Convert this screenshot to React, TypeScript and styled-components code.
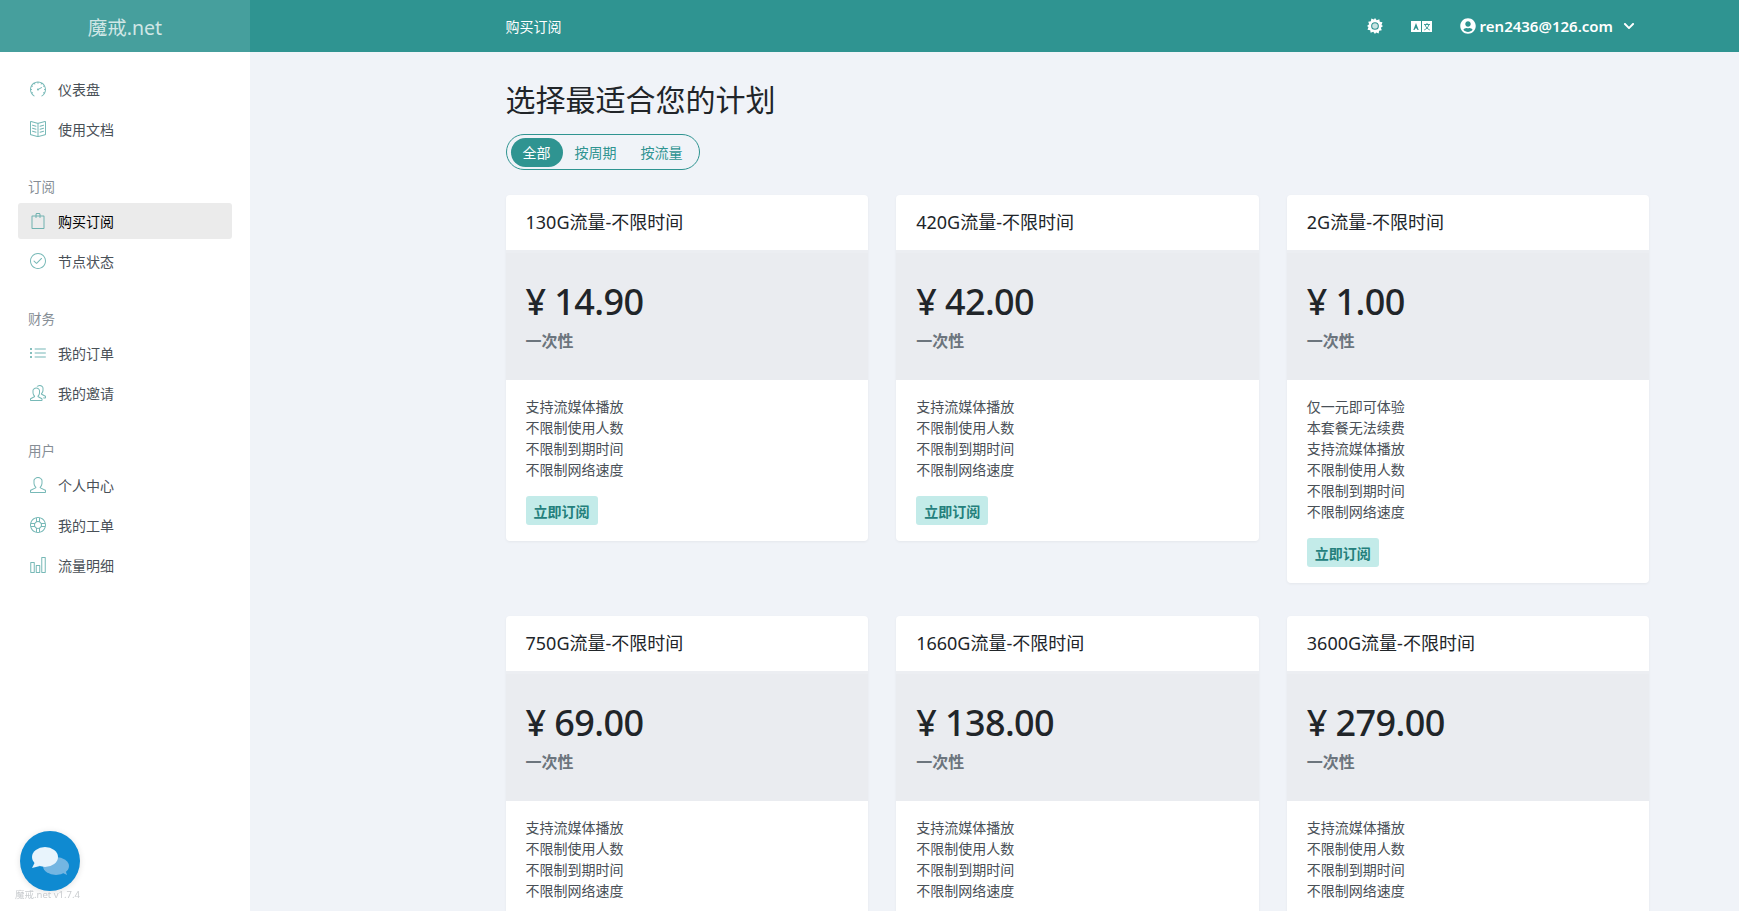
import { createGlobalStyle } from "styled-components";
import styled from "styled-components";
import { FaUserCircle, FaChevronDown } from "react-icons/fa";
import {
  SlSpeedometer,
  SlBookOpen,
  SlBag,
  SlCheck,
  SlList,
  SlPeople,
  SlUser,
  SlSupport,
  SlChart,
} from "react-icons/sl";
import type { ReactNode } from "react";

const GlobalStyle = createGlobalStyle`
  * { box-sizing: border-box; }
  html, body {
    margin: 0;
    height: 100%;
    overflow: hidden;
    background: #f0f3f8;
    color: #212529;
    font-family: "Noto Sans", "Noto Sans CJK SC", sans-serif;
    font-size: 14px;
  }
`;

const Page = styled.div`
  display: grid;
  grid-template-columns: 250px 1fr;
  grid-template-rows: 52px 1fr;
  height: 100vh;
  overflow: hidden;
`;

const Logo = styled.div`
  display: flex;
  align-items: center;
  justify-content: center;
  background: #469f9d;
  color: rgba(255, 255, 255, 0.75);
  font-size: 19.5px;
`;

const TopBar = styled.header`
  display: flex;
  align-items: center;
  justify-content: space-between;
  padding: 0 104px 0 255.5px;
  background: #2f9491;
  color: #fff;
`;

const TopTitle = styled.span`
  font-size: 14px;
`;

const TopActions = styled.div`
  display: flex;
  align-items: center;
  gap: 28px;
`;

const UserMenu = styled.div`
  display: flex;
  align-items: center;
  gap: 4px;
  font-size: 15px;
  font-weight: 600;
  > svg:last-child {
    margin-left: 6px;
  }
`;

const Sidebar = styled.nav`
  background: #fff;
  padding: 19px 18px 0;
`;

const SectionLabel = styled.div`
  height: 24px;
  line-height: 24px;
  margin: 28px 0 4px;
  padding-left: 10px;
  color: #868e96;
  font-size: 13.5px;
`;

const NavItem = styled.a<{ $active?: boolean }>`
  display: flex;
  align-items: center;
  gap: 12px;
  height: 36px;
  margin-bottom: 4px;
  padding: 0 12px;
  border-radius: 3px;
  background: ${(p) => (p.$active ? "#ebebeb" : "transparent")};
  color: ${(p) => (p.$active ? "#000" : "#495057")};
  font-size: 14px;
  svg {
    color: #2f9491;
    opacity: 0.65;
    font-size: 16px;
  }
`;

const Main = styled.main`
  padding-left: 227.5px;
`;

const Content = styled.div`
  width: 1200px;
  padding: 25px 28px 0;
`;

const Title = styled.h1`
  margin: 0 0 12px;
  font-size: 30px;
  font-weight: 400;
  line-height: 45px;
  color: #212529;
`;

const Tabs = styled.div`
  display: inline-flex;
  align-items: center;
  height: 36px;
  padding: 0 4px;
  border: 1px solid #2f9491;
  border-radius: 18px;
`;

const Tab = styled.span<{ $active?: boolean }>`
  height: 29px;
  line-height: 29px;
  padding: 0 12px;
  border-radius: 15px;
  background: ${(p) => (p.$active ? "#2f9491" : "transparent")};
  color: ${(p) => (p.$active ? "#fff" : "#2f9491")};
  font-size: 14px;
`;

const PlanGrid = styled.div`
  display: grid;
  grid-template-columns: repeat(3, 1fr);
  column-gap: 28px;
  row-gap: 33px;
  align-items: start;
  margin-top: 25px;
`;

const Card = styled.section`
  background: #fff;
  border-radius: 4px;
  box-shadow: 0 1px 3px rgba(0, 0, 0, 0.05);
`;

const CardHeader = styled.h3`
  margin: 0;
  padding: 0 20px;
  height: 55px;
  line-height: 55px;
  font-size: 18px;
  font-weight: 400;
  color: #212529;
`;

const PriceBlock = styled.div`
  height: 130px;
  padding: 22px 20px 0;
  border-top: 3px solid #eceef2;
  background: #eaecf0;
`;

const Price = styled.div`
  font-size: 36px;
  font-weight: 500;
  line-height: 54px;
  letter-spacing: -0.6px;
  color: #212529;
`;

const Period = styled.div`
  font-size: 16px;
  font-weight: 600;
  line-height: 24px;
  color: #6c757d;
`;

const CardBody = styled.div`
  padding: 16px 20px 16px;
`;

const Feature = styled.div`
  height: 21px;
  line-height: 21px;
  font-size: 14px;
  color: #495057;
`;

const SubscribeButton = styled.button`
  display: block;
  height: 29px;
  margin-top: 16px;
  padding: 0 8px;
  border: none;
  border-radius: 3px;
  background: #c3ebe9;
  color: #24807c;
  font: 700 14px "Noto Sans", "Noto Sans CJK SC", sans-serif;
`;

const ChatButton = styled.div`
  position: fixed;
  left: 20px;
  bottom: 20px;
  display: flex;
  align-items: center;
  justify-content: center;
  width: 60px;
  height: 60px;
  border-radius: 50%;
  background: #0f8ad1;
  box-shadow: 0 1px 6px rgba(0, 0, 0, 0.12);
`;

const Version = styled.div`
  position: fixed;
  left: 15px;
  bottom: 10px;
  font-size: 9.5px;
  color: #c9cccf;
  white-space: nowrap;
`;

const SunIcon = () => (
  <svg width="16" height="16" viewBox="0 0 24 24" fill="#fff">
    <path d="M12 0l2.6 3.2 3.9-1.4.7 4 4 .7-1.4 3.9L24 12l-3.2 2.6 1.4 3.9-4 .7-.7 4-3.9-1.4L12 24l-2.6-3.2-3.9 1.4-.7-4-4-.7 1.4-3.9L0 12l3.2-2.6-1.4-3.9 4-.7.7-4 3.9 1.4z" />
    <circle cx="12" cy="12" r="5" fill="#c9e4e3" stroke="#2f9491" strokeWidth="1.6" />
  </svg>
);

const TranslateIcon = () => (
  <svg width="21" height="11" viewBox="0 0 21 11">
    <rect x="0" y="0" width="10" height="11" fill="#fff" />
    <path d="M5 2 L2.3 9 H3.6 L4.1 7.5 H5.9 L6.4 9 H7.7 Z" fill="#2f9491" />
    <rect x="11" y="0" width="10" height="11" fill="#fff" />
    <path d="M13 3.5h6M16 2v1.5M14.2 4c.6 2.2 2.5 4 4.6 5M17.8 4c-.6 2.2-2.5 4-4.6 5" stroke="#2f9491" strokeWidth="0.9" fill="none" />
  </svg>
);

const ChatIcon = () => (
  <svg width="40" height="34" viewBox="0 0 40 34">
    <ellipse cx="26" cy="22" rx="13" ry="9" fill="#74b6e2" />
    <path d="M31 28l6 3-2-6z" fill="#74b6e2" />
    <ellipse cx="15" cy="13" rx="13" ry="10" fill="#e8f4fc" />
    <path d="M5 18l-3 6 8-2z" fill="#e8f4fc" />
  </svg>
);

const topNav: { icon: ReactNode; label: string; active?: boolean }[] = [
  { icon: <SlSpeedometer />, label: "仪表盘" },
  { icon: <SlBookOpen />, label: "使用文档" },
];

const sections: { label: string; items: { icon: ReactNode; label: string; active?: boolean }[] }[] = [
  {
    label: "订阅",
    items: [
      { icon: <SlBag />, label: "购买订阅", active: true },
      { icon: <SlCheck />, label: "节点状态" },
    ],
  },
  {
    label: "财务",
    items: [
      { icon: <SlList />, label: "我的订单" },
      { icon: <SlPeople />, label: "我的邀请" },
    ],
  },
  {
    label: "用户",
    items: [
      { icon: <SlUser />, label: "个人中心" },
      { icon: <SlSupport />, label: "我的工单" },
      { icon: <SlChart />, label: "流量明细" },
    ],
  },
];

const defaultFeatures = ["支持流媒体播放", "不限制使用人数", "不限制到期时间", "不限制网络速度"];

const plans = [
  { name: "130G流量-不限时间", price: "14.90", features: defaultFeatures },
  { name: "420G流量-不限时间", price: "42.00", features: defaultFeatures },
  {
    name: "2G流量-不限时间",
    price: "1.00",
    features: ["仅一元即可体验", "本套餐无法续费", ...defaultFeatures],
  },
  { name: "750G流量-不限时间", price: "69.00", features: defaultFeatures },
  { name: "1660G流量-不限时间", price: "138.00", features: defaultFeatures },
  { name: "3600G流量-不限时间", price: "279.00", features: defaultFeatures },
];

export default function App() {
  return (
    <Page>
      <GlobalStyle />
      <Logo>魔戒.net</Logo>
      <TopBar>
        <TopTitle>购买订阅</TopTitle>
        <TopActions>
          <SunIcon />
          <TranslateIcon />
          <UserMenu>
            <FaUserCircle size={16} />
            ren2436@126.com
            <FaChevronDown size={12} />
          </UserMenu>
        </TopActions>
      </TopBar>
      <Sidebar>
        {topNav.map((item) => (
          <NavItem key={item.label}>
            {item.icon}
            {item.label}
          </NavItem>
        ))}
        {sections.map((section) => (
          <div key={section.label}>
            <SectionLabel>{section.label}</SectionLabel>
            {section.items.map((item) => (
              <NavItem key={item.label} $active={item.active}>
                {item.icon}
                {item.label}
              </NavItem>
            ))}
          </div>
        ))}
      </Sidebar>
      <Main>
        <Content>
          <Title>选择最适合您的计划</Title>
          <Tabs>
            <Tab $active>全部</Tab>
            <Tab>按周期</Tab>
            <Tab>按流量</Tab>
          </Tabs>
          <PlanGrid>
            {plans.map((plan) => (
              <Card key={plan.name}>
                <CardHeader>{plan.name}</CardHeader>
                <PriceBlock>
                  <Price>¥ {plan.price}</Price>
                  <Period>一次性</Period>
                </PriceBlock>
                <CardBody>
                  {plan.features.map((f) => (
                    <Feature key={f}>{f}</Feature>
                  ))}
                  <SubscribeButton>立即订阅</SubscribeButton>
                </CardBody>
              </Card>
            ))}
          </PlanGrid>
        </Content>
      </Main>
      <ChatButton>
        <ChatIcon />
      </ChatButton>
      <Version>魔戒.net v1.7.4</Version>
    </Page>
  );
}
